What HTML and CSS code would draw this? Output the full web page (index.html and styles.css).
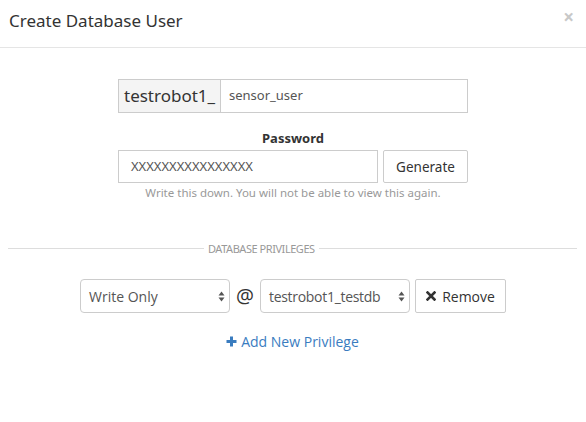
FILE: index.html
```html
<!DOCTYPE html>
<html>
<head>
<meta charset="utf-8">
<link rel="stylesheet" href="styles.css">
</head>
<body>
<div class="modal">
  <div class="modal-header">
    <h4 class="title">Create Database User</h4>
    <span class="close">&times;</span>
  </div>
  <div class="modal-body">
    <div class="form">
      <div class="input-group">
        <span class="addon">testrobot1_</span>
        <div class="input user">sensor_user</div>
      </div>
      <div class="label">Password</div>
      <div class="pw-row">
        <div class="input pw">XXXXXXXXXXXXXXXX</div>
        <div class="btn">Generate</div>
      </div>
      <div class="help">Write this down. You will not be able to view this again.</div>
    </div>
    <div class="divider"><span class="line left"></span><span class="dtext">DATABASE PRIVILEGES</span><span class="line right"></span></div>
    <div class="priv-row">
      <div class="select s1"><span>Write Only</span><svg class="arr" width="7" height="11" viewBox="0 0 7 11"><path d="M3.5 0.5 L6.5 4.5 L0.5 4.5 Z M3.5 10.5 L6.5 6.5 L0.5 6.5 Z" fill="#555"/></svg></div>
      <span class="at">@</span>
      <div class="select s2"><span>testrobot1_testdb</span><svg class="arr" width="7" height="11" viewBox="0 0 7 11"><path d="M3.5 0.5 L6.5 4.5 L0.5 4.5 Z M3.5 10.5 L6.5 6.5 L0.5 6.5 Z" fill="#555"/></svg></div>
      <div class="btn remove"><svg width="10" height="10" viewBox="0 0 10 10"><path d="M1.5 1.5 L8.5 8.5 M8.5 1.5 L1.5 8.5" stroke="#333" stroke-width="2.6" stroke-linecap="square"/></svg>Remove</div>
    </div>
    <div class="add"><svg width="11" height="11" viewBox="0 0 11 11"><path d="M5.5 0.5 V10.5 M0.5 5.5 H10.5" stroke="#3a7cbf" stroke-width="3"/></svg>Add New Privilege</div>
  </div>
</div>
</body>
</html>
```
FILE: styles.css
```css
html, body {
  margin: 0;
  padding: 0;
  background: #fff;
}
body {
  font-family: "Noto Sans", "Open Sans", sans-serif;
  color: #333;
  font-size: 14px;
}
.modal {
  width: 586px;
}
.modal-header {
  display: flex;
  justify-content: space-between;
  align-items: flex-start;
  padding: 8px 12px 0 9px;
  height: 39px;
  border-bottom: 1px solid #e5e5e5;
}
.title {
  margin: 0;
  font-weight: normal;
  font-size: 17px;
  line-height: 26px;
  color: #333;
}
.close {
  color: #c8c8c8;
  font-size: 19px;
  font-weight: bold;
  line-height: 18px;
}
.modal-body {
  padding: 31px 9px 0 8px;
}
.form {
  width: 350px;
  margin: 0 auto 0 110px;
  display: flex;
  flex-direction: column;
}
.input-group {
  display: flex;
  height: 34px;
}
.addon {
  box-sizing: border-box;
  width: 102px;
  border: 1px solid #ccc;
  border-right: none;
  background: #f4f4f4;
  font-family: "Noto Sans", sans-serif;
  font-size: 17px;
  line-height: 32px;
  padding-left: 5px;
  color: #333;
  white-space: nowrap;
  overflow: hidden;
}
.input {
  box-sizing: border-box;
  border: 1px solid #ccc;
  background: #fff;
  font-size: 13px;
  line-height: 31px;
  color: #555;
}
.user {
  flex: 1;
  padding-left: 8px;
}
.label {
  text-align: center;
  font-weight: bold;
  font-size: 13px;
  line-height: 18px;
  margin-top: 16px;
  margin-bottom: 3px;
  color: #333;
}
.pw-row {
  display: flex;
  gap: 5px;
  height: 33px;
}
.pw {
  width: 260px;
  padding-left: 12px;
}
.btn {
  box-sizing: border-box;
  border: 1px solid #ccc;
  border-radius: 2px;
  background: #fff;
  font-size: 13.5px;
  color: #333;
  display: flex;
  align-items: center;
  justify-content: center;
  flex: 1;
}
.help {
  text-align: center;
  font-size: 11.5px;
  color: #999;
  margin-top: 2px;
  line-height: 16px;
}
.divider {
  display: flex;
  align-items: center;
  gap: 4px;
  margin-top: 40px;
  font-size: 11px;
  color: #999;
}
.line {
  height: 1px;
  background: #ddd;
}
.line.left { width: 196px; }
.line.right { flex: 1; }
.dtext {
  letter-spacing: -0.45px;
}
.priv-row {
  display: flex;
  align-items: center;
  margin-top: 23px;
  margin-left: 72px;
  height: 34px;
}
.select {
  box-sizing: border-box;
  height: 34px;
  border: 1px solid #ccc;
  border-radius: 4px;
  background: #fff;
  display: flex;
  align-items: center;
  justify-content: space-between;
  font-family: "Open Sans", sans-serif;
  font-size: 14px;
  color: #555;
  padding: 0 4px 0 8px;
}
.s1 { width: 150px; }
.s2 { width: 150px; }
.s2 span { letter-spacing: -0.3px; }
.at {
  font-family: "Open Sans", sans-serif;
  font-size: 20px;
  color: #333;
  width: 30px;
  text-align: center;
  line-height: 34px;
}
.remove {
  flex: none;
  width: 91px;
  height: 34px;
  margin-left: 5px;
  font-size: 14px;
  font-family: "Open Sans", sans-serif;
  gap: 6px;
}
.add {
  display: flex;
  align-items: center;
  justify-content: center;
  gap: 4px;
  margin-top: 19px;
  font-family: "Open Sans", sans-serif;
  font-size: 14px;
  color: #3a7cbf;
}
```
